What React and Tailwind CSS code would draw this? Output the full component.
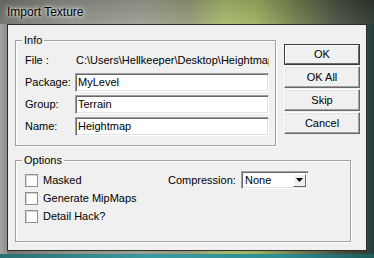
const font = { fontFamily: '"Liberation Sans", Arial, sans-serif' }

function GroupBox({ title, className, children }) {
  return (
    <div className={`relative border border-[#a0a0a0] shadow-[1px_1px_0_#ffffff,inset_1px_1px_0_#ffffff] ${className}`}>
      <span className="absolute -top-[8px] left-[6px] px-[2px] bg-[#f0f0f0] leading-[14px]">{title}</span>
      {children}
    </div>
  )
}

function TextBox({ value }) {
  return (
    <div className="h-[19px] flex-1 bg-white border border-t-[#a0a0a0] border-l-[#a0a0a0] border-b-white border-r-white shadow-[inset_1px_1px_0_#696969,inset_-1px_-1px_0_#e3e3e3] flex items-center pl-[2px] leading-none">
      {value}
    </div>
  )
}

function Button({ label }) {
  return (
    <div className="h-[22px] bg-[#f0f0f0] border border-t-white border-l-white border-b-[#696969] border-r-[#696969] shadow-[inset_-1px_-1px_0_#a0a0a0,inset_1px_1px_0_#e3e3e3] flex items-center justify-center leading-none">
      {label}
    </div>
  )
}

function Check({ label }) {
  return (
    <div className="h-[18px] flex items-center">
      <span className="w-[13px] h-[13px] bg-white border border-[#8f8f8f] shadow-[inset_1px_1px_0_#d4d4d4]" />
      <span className="ml-[5px] leading-none">{label}</span>
    </div>
  )
}

export default function App() {
  return (
    <div
      style={font}
      className="w-[374px] h-[258px] overflow-hidden flex flex-col text-[11px] text-black bg-[linear-gradient(90deg,#6f716b_0%,#8d9087_18%,#9c9e92_38%,#939a78_50%,#a7b86c_60%,#9fb262_68%,#6f7c4e_80%,#4a5242_90%,#2e382e_100%)]"
    >
      {/* Title bar */}
      <div className="h-[24px] pl-[7px] flex items-center bg-[linear-gradient(180deg,rgba(0,0,0,0.12),rgba(255,255,255,0.05))]">
        <span className="text-[12px] leading-none [text-shadow:0_0_6px_#ffffff,0_0_3px_#ffffff]">Import Texture</span>
      </div>

      {/* Frame + client */}
      <div className="flex-1 flex px-[7px] pb-[3px] bg-[linear-gradient(90deg,#a4a6a2_0px,#8c8e88_7px,transparent_8px,transparent_366px,#33453f_367px,#1f3a3a_374px)]">
        <div className="flex-1 flex flex-col border border-[#2c2c2c] bg-[#f0f0f0] pl-[7px] pt-[15px]">
          <div className="flex items-start">
            <GroupBox title="Info" className="w-[261px] h-[106px]">
              <div className="flex flex-col pl-[9px] pr-[6px] pt-[11px]">
                <div className="h-[16px] flex items-center whitespace-nowrap overflow-hidden">
                  <span className="w-[51px] shrink-0">File :</span>
                  <span>C:\Users\Hellkeeper\Desktop\Heightmap</span>
                </div>
                <div className="flex flex-col gap-[3px] mt-[5px]">
                  {[
                    ['Package:', 'MyLevel'],
                    ['Group:', 'Terrain'],
                    ['Name:', 'Heightmap'],
                  ].map(([l, v]) => (
                    <div key={l} className="flex items-center">
                      <span className="w-[50px] shrink-0">{l}</span>
                      <TextBox value={v} />
                    </div>
                  ))}
                </div>
              </div>
            </GroupBox>
            <div className="w-[76px] ml-[8px] mt-[4px] flex flex-col gap-[1px]">
              <div className="border border-[#3c3c3c]">
                <div className="h-[19px] bg-[#f0f0f0] border border-t-white border-l-white border-b-[#696969] border-r-[#696969] flex items-center justify-center leading-none">
                  OK
                </div>
              </div>
              <Button label="OK All" />
              <Button label="Skip" />
              <Button label="Cancel" />
            </div>
          </div>

          <GroupBox title="Options" className="w-[336px] h-[82px] mt-[14px]">
            <div className="flex pl-[9px] pt-[10px]">
              <div className="w-[143px] flex flex-col">
                <Check label="Masked" />
                <Check label="Generate MipMaps" />
                <Check label="Detail Hack?" />
              </div>
              <div className="h-[18px] flex items-center">
                <span className="w-[73px] leading-none">Compression:</span>
                <div className="w-[68px] h-[18px] bg-white border border-t-[#a0a0a0] border-l-[#a0a0a0] border-b-white border-r-white shadow-[inset_1px_1px_0_#696969,inset_-1px_-1px_0_#e3e3e3] flex items-center pl-[3px] pr-[2px]">
                  <span className="flex-1 leading-none">None</span>
                  <span className="w-[13px] h-[13px] bg-[#f0f0f0] border border-t-white border-l-white border-b-[#696969] border-r-[#696969] flex items-center justify-center">
                    <svg width="7" height="4" viewBox="0 0 7 4">
                      <path d="M0 0H7L3.5 4Z" fill="#000" />
                    </svg>
                  </span>
                </div>
              </div>
            </div>
          </GroupBox>
        </div>
      </div>
      <div className="h-[4px] bg-[linear-gradient(90deg,#2b6f72_0%,#3a9aa2_40%,#2f8d94_75%,#1e5a5a_100%)]" />
    </div>
  )
}
